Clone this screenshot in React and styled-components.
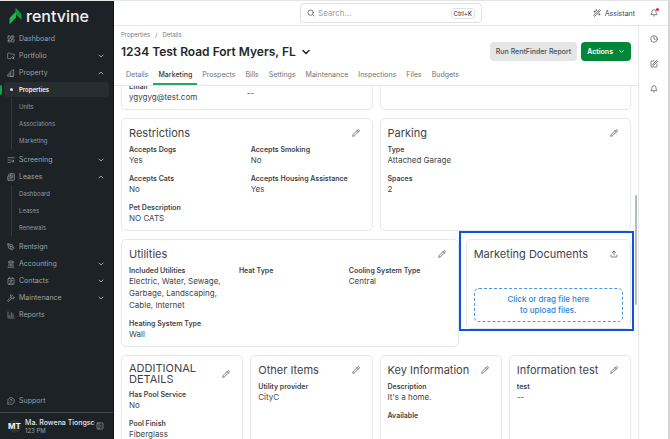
import React, { useLayoutEffect, useRef } from 'react';
import styled, { createGlobalStyle, css } from 'styled-components';
import {
    Bell, ChartColumn, ChevronDown, ChevronUp, Clock, Contact, FolderSearch, Hammer, Landmark,
    LayoutDashboard, MessageCircleQuestionMark, Newspaper, PanelLeftClose, PenTool, Pencil, Search,
    SquarePen, TextSearch, Upload, WandSparkles
} from 'lucide-react';

const PropertyIcon = () => (
    <svg width="8" height="8" viewBox="0 0 24 24" fill="none" stroke="currentColor" strokeWidth="2" strokeLinejoin="round">
        <path d="M10 22V8l10-6v20zM10 12l-8 5v5h18M14 10h2M14 14h2M14 18h2M5 18h2" />
    </svg>
);

const navItems = [
    { name: 'Dashboard', icon: LayoutDashboard },
    { name: 'Portfolio', icon: FolderSearch, menu: true },
    { name: 'Property', icon: PropertyIcon, menu: true, children: ['Properties', 'Units', 'Associations', 'Marketing'] },
    { name: 'Screening', icon: TextSearch, menu: true },
    { name: 'Leases', icon: Newspaper, menu: true, children: ['Dashboard', 'Leases', 'Renewals'] },
    { name: 'Rentsign', icon: PenTool },
    { name: 'Accounting', icon: Landmark, menu: true },
    { name: 'Contacts', icon: Contact, menu: true },
    { name: 'Maintenance', icon: Hammer, menu: true },
    { name: 'Reports', icon: ChartColumn },
];

const tabs = ['Details', 'Marketing', 'Prospects', 'Bills', 'Settings', 'Maintenance', 'Inspections', 'Files', 'Budgets'];

function Sidebar() {
    return (
        <StyledSidebar>
            <Logo href="#">
                <svg width="13" height="18" viewBox="0 0 26 36">
                    <path d="M1 35V22L14 9V21z" fill="#1fb455" />
                    <path d="M13 1L25 14V26L13 14z" fill="#0c9a40" />
                </svg>
                rentvine
            </Logo>
            <Nav>
                {navItems.map(({ name, icon: Icon, menu, children }) => (
                    <div key={name}>
                        <NavLink href="#">
                            <Icon size={8} />
                            <NavText>{name}</NavText>
                            {menu && (children ? <ChevronUp size={8} strokeWidth={3} /> : <ChevronDown size={8} strokeWidth={3} />)}
                        </NavLink>
                        {children && (
                            <SubNav>
                                {children.map((child) => (
                                    <SubLink href="#" key={child} $active={child === 'Properties'}>{child}</SubLink>
                                ))}
                            </SubNav>
                        )}
                    </div>
                ))}
            </Nav>
            <Support>
                <NavLink href="#"><MessageCircleQuestionMark size={8} /><NavText>Support</NavText></NavLink>
            </Support>
            <User>
                <Avatar>MT</Avatar>
                <UserInfo>
                    <UserName>Ma. Rowena Tiongsc</UserName>
                    <UserTime>123 PM</UserTime>
                </UserInfo>
                <IconButton aria-label="Collapse sidebar"><PanelLeftClose size={8} /></IconButton>
            </User>
        </StyledSidebar>
    )
}

function Card({ title, icon: Icon = Pencil, children, tall }) {
    return (
        <StyledCard $tall={tall}>
            {title && (
                <CardHeader>
                    <CardTitle>{title}</CardTitle>
                    <IconButton aria-label={`Edit ${title}`}><Icon size={8} strokeWidth={2} /></IconButton>
                </CardHeader>
            )}
            {children}
        </StyledCard>
    )
}

function Field({ label, value }) {
    return (
        <div>
            {label && <Label>{label}</Label>}
            <Value>{value}</Value>
        </div>
    )
}

function App() {
    const scroller = useRef(null);

    useLayoutEffect(() => {
        scroller.current.scrollTop = 20;
    }, []);

    return (
        <>
            <GlobalStyle />
            <Page>
                <Sidebar />
                <Workspace>
                    <TopBar>
                        <SearchBox>
                            <Search size={8} />
                            <SearchInput type="text" aria-label="Search" placeholder="Search..." />
                            <Shortcut>Ctrl+K</Shortcut>
                        </SearchBox>
                        <TopActions>
                            <AssistantButton><WandSparkles size={8} />Assistant</AssistantButton>
                            <Alerts aria-label="Notifications"><Bell size={8} /></Alerts>
                        </TopActions>
                    </TopBar>
                    <Body>
                        <Main>
                            <Header>
                                <Breadcrumb>
                                    <a href="#">Properties</a><span>/</span><a href="#">Details</a>
                                </Breadcrumb>
                                <TitleRow>
                                    <Title>1234 Test Road Fort Myers, FL <ChevronDown size={12} strokeWidth={3} /></Title>
                                    <Buttons>
                                        <Button>Run RentFinder Report</Button>
                                        <Button $primary>Actions <ChevronDown size={7} strokeWidth={3} /></Button>
                                    </Buttons>
                                </TitleRow>
                                <Tabs>
                                    {tabs.map((tab) => (
                                        <Tab href="#" key={tab} $active={tab === 'Marketing'}>{tab}</Tab>
                                    ))}
                                </Tabs>
                            </Header>
                            <ScrollWrap>
                                <Scroller ref={scroller}>
                                    <Row $columns={2}>
                                        <Card>
                                            <Fields $columns={2} $flush>
                                                <Field label="Email" value="ygygyg@test.com" />
                                                <Field value="--" />
                                            </Fields>
                                        </Card>
                                        <Card />
                                    </Row>
                                    <Row $columns={2}>
                                        <Card title="Restrictions">
                                            <Fields $columns={2}>
                                                <Field label="Accepts Dogs" value="Yes" />
                                                <Field label="Accepts Smoking" value="No" />
                                                <Field label="Accepts Cats" value="No" />
                                                <Field label="Accepts Housing Assistance" value="Yes" />
                                                <Field label="Pet Description" value="NO CATS" />
                                            </Fields>
                                        </Card>
                                        <Card title="Parking">
                                            <Fields $columns={1}>
                                                <Field label="Type" value="Attached Garage" />
                                                <Field label="Spaces" value="2" />
                                            </Fields>
                                        </Card>
                                    </Row>
                                    <Row $columns={3}>
                                        <Wide>
                                            <Card title="Utilities">
                                                <Fields $columns={3}>
                                                    <Field label="Included Utilities" value="Electric, Water, Sewage, Garbage, Landscaping, Cable, Internet" />
                                                    <Field label="Heat Type" />
                                                    <Field label="Cooling System Type" value="Central" />
                                                    <Field label="Heating System Type" value="Wall" />
                                                </Fields>
                                            </Card>
                                        </Wide>
                                        <Highlight>
                                            <Card title="Marketing Documents" icon={Upload}>
                                                <DropZone>Click or drag file here<br />to upload files.</DropZone>
                                            </Card>
                                        </Highlight>
                                    </Row>
                                    <Row $columns={4}>
                                        <Card title="ADDITIONAL DETAILS" tall>
                                            <Fields $columns={1}>
                                                <Field label="Has Pool Service" value="No" />
                                                <Field label="Pool Finish" value="Fiberglass" />
                                            </Fields>
                                        </Card>
                                        <Card title="Other Items" tall>
                                            <Fields $columns={1}>
                                                <Field label="Utility provider" value="CityC" />
                                            </Fields>
                                        </Card>
                                        <Card title="Key Information" tall>
                                            <Fields $columns={1}>
                                                <Field label="Description" value="It's a home." />
                                                <Field label="Available" />
                                            </Fields>
                                        </Card>
                                        <Card title="Information test" tall>
                                            <Fields $columns={1}>
                                                <Field label="test" value="--" />
                                            </Fields>
                                        </Card>
                                    </Row>
                                </Scroller>
                                <Thumb />
                            </ScrollWrap>
                        </Main>
                        <Rail>
                            <IconButton aria-label="History"><Clock size={8} /></IconButton>
                            <IconButton aria-label="Notes"><SquarePen size={8} /></IconButton>
                            <IconButton aria-label="Reminders"><Bell size={8} /></IconButton>
                        </Rail>
                    </Body>
                </Workspace>
            </Page>
        </>
    )
}

export default App

const GlobalStyle = createGlobalStyle`
    * {
        box-sizing: border-box;
    }
    body {
        margin: 0;
        font-family: Inter, "Liberation Sans", sans-serif;
        font-size: 7px;
        color: #3f4346;
        background: white;
    }
    a {
        color: inherit;
        text-decoration: none;
    }
    button, input {
        font: inherit;
        color: inherit;
    }
    svg {
        flex: none;
    }
`;
const Page = styled.div`
    display: grid;
    grid-template-columns: 114px minmax(0, 1fr);
    height: 100vh;
    overflow: hidden;
    border-top: 1px solid #e4e6e6;
    border-right: 2px solid #d3d5d5;
`;
const StyledSidebar = styled.aside`
    display: flex;
    flex-direction: column;
    min-height: 0;
    background: #1c2226;
    color: #99a2aa;
    border-right: 1px solid #0e1317;
`;
const Logo = styled.a`
    display: flex;
    align-items: center;
    gap: 4px;
    height: 29px;
    padding-left: 9px;
    font-size: 16px;
    font-weight: 500;
    color: #eef0f1;
`;
const Nav = styled.nav`
    flex: 1;
`;
const NavLink = styled.a`
    display: flex;
    align-items: center;
    gap: 4px;
    height: 17px;
    padding: 0 8px 0 7px;
`;
const NavText = styled.span`
    flex: 1;
`;
const SubNav = styled.div`
    margin: 0 4px 2px 11px;
    border-left: 1px solid #32393e;
`;
const SubLink = styled.a`
    position: relative;
    display: flex;
    align-items: center;
    height: 17px;
    padding-left: 7px;
    font-size: 6px;
    color: #8f99a1;
    ${({ $active }) => $active && css`
        height: 15px;
        margin: 1px 0 1px -8px;
        padding-left: 15px;
        border-radius: 4px;
        background: #272d31;
        color: #f2f4f5;
        font-weight: 600;
        &::before {
            content: "";
            position: absolute;
            left: -4px;
            width: 2px;
            height: 10px;
            border-radius: 0 2px 2px 0;
            background: #10a04a;
        }
        &::after {
            content: "";
            position: absolute;
            left: 6px;
            width: 3px;
            height: 3px;
            border-radius: 50%;
            background: #d8dcdf;
        }
    `}
`;
const Support = styled.div`
    padding-bottom: 3px;
`;
const User = styled.div`
    display: flex;
    align-items: center;
    gap: 4px;
    height: 27px;
    padding: 0 9px 0 8px;
    border-top: 1px solid #41484d;
`;
const Avatar = styled.div`
    display: grid;
    place-items: center;
    width: 13px;
    height: 13px;
    border-radius: 50%;
    background: #2b3236;
    font-size: 8px;
    font-weight: 700;
    color: #f2f4f5;
`;
const UserInfo = styled.div`
    flex: 1;
    min-width: 0;
    white-space: nowrap;
`;
const UserName = styled.div`
    font-weight: 500;
    line-height: 9px;
    color: #e3e6e8;
`;
const UserTime = styled.div`
    font-size: 6px;
    line-height: 8px;
`;
const IconButton = styled.button`
    display: grid;
    place-items: center;
    padding: 0;
    border: none;
    background: none;
`;
const Workspace = styled.div`
    display: flex;
    flex-direction: column;
    min-width: 0;
    min-height: 0;
`;
const TopBar = styled.header`
    display: grid;
    grid-template-columns: 1fr 182px 1fr;
    align-items: center;
    height: 25px;
    flex: none;
    border-bottom: 1px solid #e5e7e8;
`;
const SearchBox = styled.label`
    grid-column: 2;
    display: flex;
    align-items: center;
    gap: 3px;
    height: 20px;
    padding: 0 6px;
    border: 1px solid #dfe2e3;
    border-radius: 4px;
`;
const SearchInput = styled.input`
    flex: 1;
    min-width: 0;
    padding: 0;
    border: none;
    outline: none;
    background: none;
    font-size: 8px;
    &::placeholder {
        color: #9a9fa3;
        opacity: 1;
    }
`;
const Shortcut = styled.kbd`
    padding: 1px 2px;
    border: 1px solid #dfe2e3;
    border-radius: 3px;
    font-family: inherit;
    font-size: 6px;
    font-weight: 500;
`;
const TopActions = styled.div`
    display: flex;
    justify-content: flex-end;
    align-items: center;
    gap: 15px;
    padding-right: 10px;
`;
const AssistantButton = styled.button`
    display: flex;
    align-items: center;
    gap: 4px;
    padding: 0;
    border: none;
    background: none;
`;
const Alerts = styled(IconButton)`
    position: relative;
    &::after {
        content: "";
        position: absolute;
        top: -1px;
        right: -1px;
        width: 3px;
        height: 3px;
        border-radius: 50%;
        background: #e0202c;
    }
`;
const Body = styled.div`
    display: flex;
    flex: 1;
    min-height: 0;
`;
const Main = styled.main`
    display: flex;
    flex-direction: column;
    flex: 1;
    min-width: 0;
`;
const Header = styled.div`
    padding: 4px 7px 0;
    border-bottom: 1px solid #e5e7e8;
`;
const Breadcrumb = styled.nav`
    display: flex;
    gap: 5px;
    font-size: 6px;
    line-height: 9px;
    color: #777d81;
`;
const TitleRow = styled.div`
    display: flex;
    justify-content: space-between;
    align-items: center;
    height: 25px;
`;
const Title = styled.h1`
    display: flex;
    align-items: center;
    gap: 4px;
    margin: 0;
    font-size: 12px;
    font-weight: 600;
    color: #24282b;
`;
const Buttons = styled.div`
    display: flex;
    gap: 4px;
`;
const Button = styled.button`
    display: flex;
    align-items: center;
    gap: 5px;
    height: 19px;
    padding: 0 6px;
    border: none;
    border-radius: 4px;
    background: ${({ $primary }) => $primary ? '#02873a' : '#e3e5e6'};
    color: ${({ $primary }) => $primary ? 'white' : '#4b5054'};
    font-weight: ${({ $primary }) => $primary ? 600 : 500};
`;
const Tabs = styled.nav`
    display: flex;
`;
const Tab = styled.a`
    padding: 3px 5px 0;
    line-height: 16px;
    border-bottom: 2px solid ${({ $active }) => $active ? '#2ba75a' : 'transparent'};
    color: ${({ $active }) => $active ? '#33383b' : '#6c7276'};
    font-weight: ${({ $active }) => $active ? 500 : 400};
`;
const ScrollWrap = styled.div`
    position: relative;
    flex: 1;
    min-height: 0;
`;
const Scroller = styled.div`
    display: flex;
    flex-direction: column;
    gap: 8px;
    height: 100%;
    padding: 8px 7px;
    overflow-y: auto;
    scrollbar-width: none;
`;
const Thumb = styled.div`
    position: absolute;
    top: 31%;
    right: 1px;
    width: 2px;
    height: 31%;
    border-radius: 1px;
    background: #b5babd;
`;
const Row = styled.div`
    display: grid;
    grid-template-columns: repeat(${({ $columns }) => $columns}, minmax(0, 1fr));
    gap: 7px;
`;
const Wide = styled.div`
    grid-column: span 2;
`;
const StyledCard = styled.section`
    min-height: ${({ $tall }) => $tall ? '120px' : 'auto'};
    padding: 7px 7px 6px;
    border: 1px solid #e6e8e8;
    border-radius: 5px;
`;
const CardHeader = styled.div`
    display: flex;
    align-items: center;
    justify-content: space-between;
    gap: 8px;
    min-height: 14px;
    margin-bottom: 5px;
    padding-right: 5px;
`;
const CardTitle = styled.h2`
    margin: 0;
    font-size: 11px;
    font-weight: 400;
    line-height: 11px;
`;
const Fields = styled.div`
    display: grid;
    grid-template-columns: repeat(${({ $columns }) => $columns}, minmax(0, 1fr));
    gap: 8px;
    ${({ $flush }) => $flush && css`
        column-gap: 0;
        align-items: center;
    `}
`;
const Label = styled.div`
    font-weight: 600;
    line-height: 9px;
`;
const Value = styled.div`
    font-size: 8px;
    line-height: 12px;
    min-height: 12px;
`;
const Highlight = styled.div`
    position: relative;
    align-self: start;
    &::after {
        content: "";
        position: absolute;
        inset: -8px -3px -2px -7px;
        border: 2px solid #0f52e6;
        pointer-events: none;
    }
`;
const DropZone = styled.button`
    width: 100%;
    margin-top: 22px;
    padding: 5px;
    border: 1px dashed #4a97dc;
    border-radius: 5px;
    background: none;
    font-size: 8px;
    font-weight: 500;
    line-height: 11px;
    color: #3283cf;
`;
const Rail = styled.aside`
    display: flex;
    flex-direction: column;
    align-items: center;
    gap: 17px;
    width: 30px;
    padding-top: 9px;
    border-left: 1px solid #e5e7e8;
`;
